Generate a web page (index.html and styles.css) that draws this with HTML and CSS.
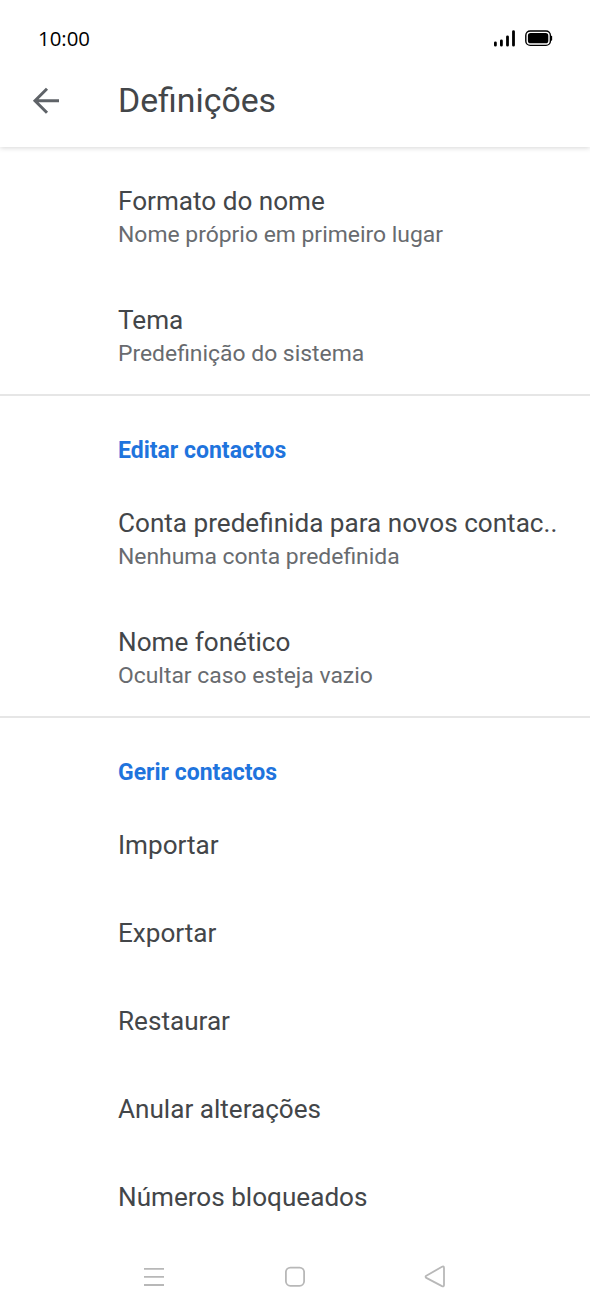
FILE: index.html
```html
<!DOCTYPE html>
<html lang="pt">
<head>
<meta charset="utf-8">
<title>Definições</title>
<link rel="stylesheet" href="styles.css">
</head>
<body>
<div class="screen">
  <div class="status"><span class="time">10:00</span>
    <svg class="status-icons" width="62" height="20" viewBox="0 0 62 20"><g stroke="#000" stroke-width="2.8" stroke-linecap="round"><path d="M3.4 17.2v-2.4M9.4 17.2v-4.4M15.5 17.2v-8.4M21.5 17.2V3.6"/></g><rect x="33.8" y="3" width="24.6" height="14.4" rx="4.4" fill="none" stroke="#000" stroke-width="1.4"/><rect x="35.9" y="5.1" width="20.4" height="10.2" rx="2.6"/><path d="M59.4 8.6v3.4" stroke="#000" stroke-width="1.5" stroke-linecap="round"/></svg>
  </div>
  <header class="bar">
    <svg class="back" width="30" height="30" viewBox="0 0 30 30" fill="none" stroke="#5f6368" stroke-width="3"><path d="M28 14.7H4M16 2.7L4 14.7l12 12"/></svg>
    <h1 class="title">Definições</h1>
  </header>
  <main class="list">
    <section class="group first">
      <div class="item two"><div class="label">Formato do nome</div><div class="sub">Nome próprio em primeiro lugar</div></div>
      <div class="item two"><div class="label">Tema</div><div class="sub">Predefinição do sistema</div></div>
    </section>
    <section class="group">
      <h2 class="heading">Editar contactos</h2>
      <div class="item two"><div class="label">Conta predefinida para novos contac..</div><div class="sub">Nenhuma conta predefinida</div></div>
      <div class="item two"><div class="label">Nome fonético</div><div class="sub">Ocultar caso esteja vazio</div></div>
    </section>
    <section class="group last">
      <h2 class="heading">Gerir contactos</h2>
      <div class="item one"><div class="label">Importar</div></div>
      <div class="item one"><div class="label">Exportar</div></div>
      <div class="item one"><div class="label">Restaurar</div></div>
      <div class="item one"><div class="label">Anular alterações</div></div>
      <div class="item one"><div class="label">Números bloqueados</div></div>
    </section>
  </main>
  <nav class="nav">
    <svg width="24" height="24" viewBox="0 0 24 24"><path d="M2 3.8H22M2 11.9H22M2 20H22"/></svg>
    <svg width="24" height="24" viewBox="0 0 24 24"><rect x="2.9" y="2.6" width="18.2" height="18.2" rx="4.5"/></svg>
    <svg width="24" height="24" viewBox="0 0 24 24"><path d="M19 1.8Q21 .9 21 2.9V20Q21 22 19 21.1L3.3 12.9Q1.8 11.8 3.3 10.7Z"/></svg>
  </nav>
</div>
</body>
</html>
```
FILE: styles.css
```css
* { box-sizing: border-box; }
body { margin: 0; background: #fff; font-family: Roboto, sans-serif; color: #434649; }
.screen { width: 590px; height: 1312px; overflow: hidden; display: flex; flex-direction: column; background: #fff; }
.status { height: 60px; flex: none; display: flex; justify-content: space-between; padding: 28px 36px 0 38px; color: #000; }
.time { font: 20.4px/21px "Open Sans", sans-serif; }
.bar { height: 87px; flex: none; display: flex; align-items: center; padding: 0 0 6px 31px; box-shadow: 0 1px 5px rgba(0,0,0,.16); clip-path: inset(0 0 -10px 0); }
.title { margin: 0 0 0 57px; font: 400 33.8px/40px Roboto, sans-serif; }
.list { flex: 1; padding-top: 1px; }
.group { padding-left: 118px; border-bottom: 2px solid #e6e6e6; height: 322px; padding-top: 24px; }
.first { height: 248px; padding-top: 8px; }
.last { border: 0; height: 516px; }
.heading { margin: 0; height: 58px; font-size: 23px; line-height: 61px; font-weight: 700; color: #1f74dd; }
.item { white-space: nowrap; }
.two { height: 119px; padding-top: 29px; }
.label { font-size: 26.12px; line-height: 32px; }
.sub { font-size: 22.9px; line-height: 36px; color: #686b6f; }
.one { height: 88px; padding-top: 29px; }
.nav { height: 74px; flex: none; display: flex; justify-content: space-between; align-items: center; padding: 4px 143px 0 142px; }
.nav svg { fill: none; stroke: #b8b8b8; stroke-width: 1.8; stroke-linejoin: round; }
```
